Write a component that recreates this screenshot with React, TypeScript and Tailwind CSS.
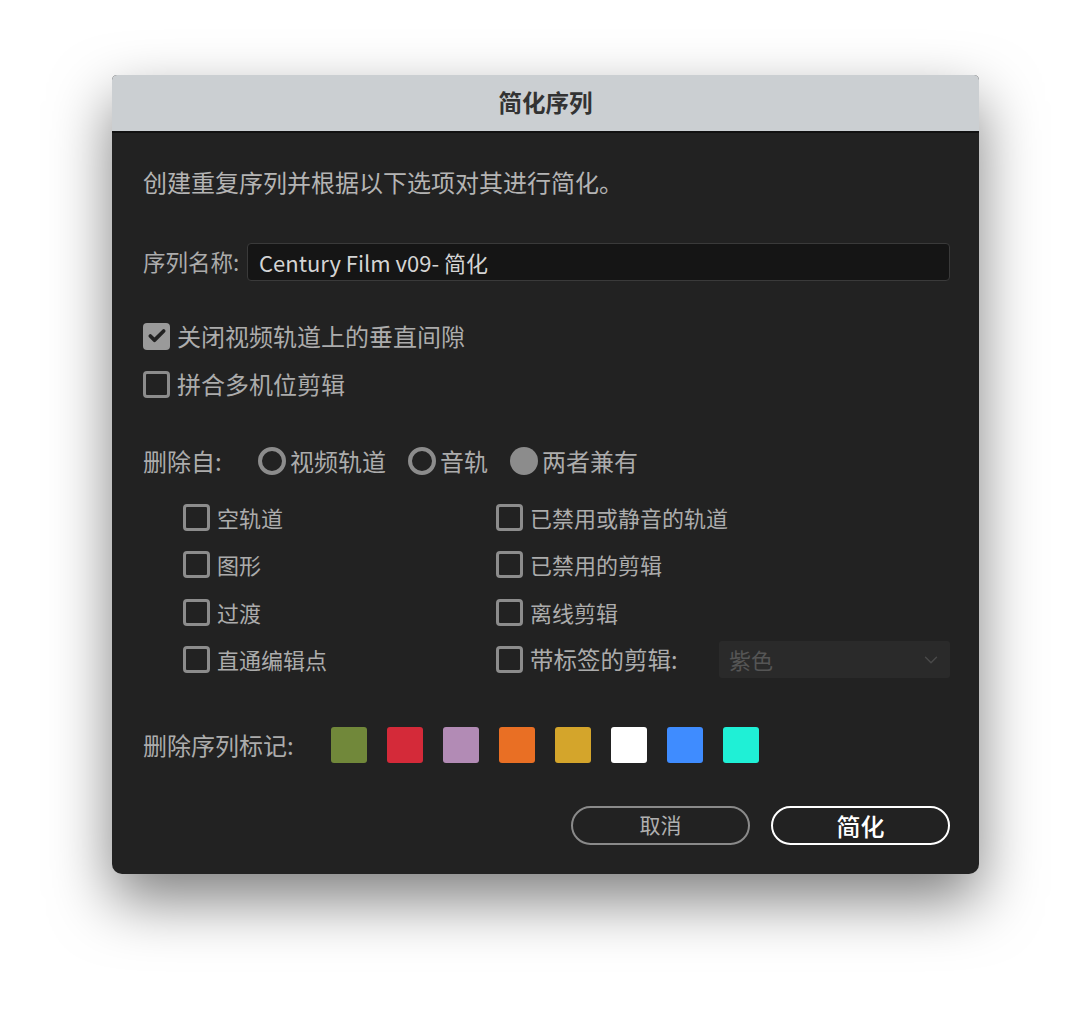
import { Check, ChevronDown } from "lucide-react";

const font = { fontFamily: '"Noto Sans CJK SC", "Noto Sans", sans-serif' };

const leftOptions = ["空轨道", "图形", "过渡", "直通编辑点"];
const rightOptions = ["已禁用或静音的轨道", "已禁用的剪辑", "离线剪辑"];

const markerColors = ["#71883a", "#d42a39", "#b28bb5", "#e96f24", "#d4a52b", "#ffffff", "#3f8cff", "#1ff0d6"];

function Box({ checked = false }: { checked?: boolean }) {
  return checked ? (
    <span className="grid h-[27px] w-[27px] shrink-0 place-items-center rounded-[4px] bg-[#9a9a9a]">
      <Check size={20} strokeWidth={4.5} className="text-[#222]" />
    </span>
  ) : (
    <span className="h-[27px] w-[27px] shrink-0 rounded-[4px] border-[3px] border-[#8c8c8c]" />
  );
}

function CheckRow({ label, checked }: { label: string; checked?: boolean }) {
  return (
    <div className="flex h-[40px] items-center gap-[7px]">
      <Box checked={checked} />
      <span>{label}</span>
    </div>
  );
}

function Radio({ label, selected = false }: { label: string; selected?: boolean }) {
  return (
    <div className="flex items-center gap-[4px]">
      {selected ? (
        <span className="h-[28px] w-[28px] rounded-full bg-[#8c8c8c]" />
      ) : (
        <span className="h-[28px] w-[28px] rounded-full border-[4px] border-[#8c8c8c]" />
      )}
      <span>{label}</span>
    </div>
  );
}

export default function App() {
  return (
    <div className="min-h-[1024px] bg-white pl-[112px] pt-[75px]" style={font}>
      <div className="w-[867px] overflow-hidden rounded-t-[5px] rounded-b-[10px] bg-[#222222] shadow-[0_26px_60px_rgba(0,0,0,0.5)]">
        <div className="flex h-[58px] items-center justify-center border-b-2 border-[#111] bg-[#cbcfd2] text-[23.5px] font-bold text-[#333]">
          简化序列
        </div>

        <div className="pb-[29px] pl-[31px] pr-[29px] text-[24px] text-[#acacac]">
          <div className="mt-[29px] flex h-[40px] items-center text-[#b4b4b4]">创建重复序列并根据以下选项对其进行简化。</div>

          <div className="mt-[41px] flex items-center">
            <span className="w-[104px] text-[22.5px]">序列名称:</span>
            <div className="flex h-[38px] flex-1 items-center rounded-[4px] border border-[#3a3a3a] bg-[#151515] px-[11px] text-[22px] text-[#d4d4d4]">
              Century Film v09- 简化
            </div>
          </div>

          <div className="mt-[35px] flex flex-col gap-[8px]">
            <CheckRow label="关闭视频轨道上的垂直间隙" checked />
            <CheckRow label="拼合多机位剪辑" />
          </div>

          <div className="mt-[37px] flex h-[40px] items-center">
            <span className="w-[115px]">删除自:</span>
            <div className="flex items-center gap-[22px]">
              <Radio label="视频轨道" />
              <Radio label="音轨" />
              <Radio label="两者兼有" selected />
            </div>
          </div>

          <div className="ml-[40px] mt-[16px] grid grid-cols-[313px_1fr] gap-y-[7.5px] text-[22px]">
            {leftOptions.map((left, i) => (
              <div key={left} className="contents">
                <CheckRow label={left} />
                {i < 3 ? (
                  <CheckRow label={rightOptions[i]} />
                ) : (
                  <div className="flex h-[40px] items-center">
                    <div className="flex h-[40px] w-[223px] items-center gap-[7px]">
                      <Box />
                      <span className="text-[23.5px]">带标签的剪辑:</span>
                    </div>
                    <div className="flex h-[37px] flex-1 items-center justify-between rounded-[3px] bg-[#2a2a2a] pl-[10px] pr-[8px] text-[22px] text-[#555]">
                      <span>紫色</span>
                      <ChevronDown size={22} strokeWidth={1.5} className="text-[#4a4a4a]" />
                    </div>
                  </div>
                )}
              </div>
            ))}
          </div>

          <div className="mt-[47px] flex h-[36px] items-center">
            <span className="w-[188px]">删除序列标记:</span>
            <div className="flex gap-[20px]">
              {markerColors.map((c) => (
                <span key={c} className="h-[36px] w-[36px] rounded-[3px]" style={{ backgroundColor: c }} />
              ))}
            </div>
          </div>

          <div className="mt-[43px] flex justify-end gap-[21px]">
            <button className="h-[39px] w-[179px] rounded-full border-2 border-[#8a8a8a] text-[21px] text-[#b0b0b0]">
              取消
            </button>
            <button className="h-[39px] w-[179px] rounded-full border-2 border-white text-[24px] font-medium text-white">
              简化
            </button>
          </div>
        </div>
      </div>
    </div>
  );
}
